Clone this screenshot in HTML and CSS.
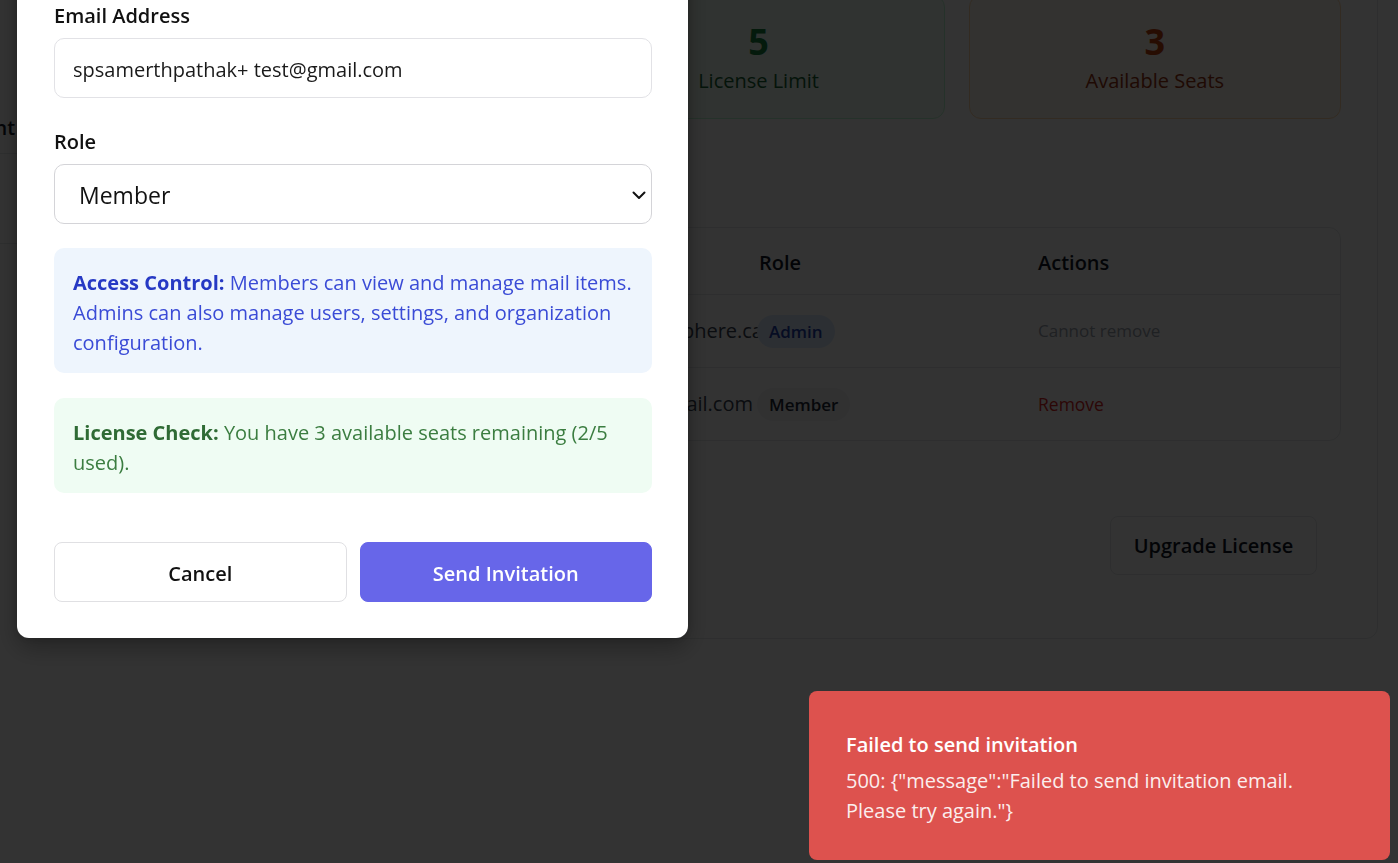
FILE: index.html
```html
<!DOCTYPE html>
<html lang="en">
<head>
<meta charset="utf-8">
<title>Team Members</title>
<link rel="stylesheet" href="styles.css">
</head>
<body>
<div class="app">
  <aside class="sidebar">
    <div class="side-brand">
      <div class="brand-name">Mail</div>
      <div class="brand-sub">Management</div>
    </div>
    <nav class="side-nav">
      <div class="side-link">Team</div>
    </nav>
  </aside>
  <main class="main">
    <section class="panel">
      <div class="stats">
        <div class="stat stat-blue">
          <div class="stat-num">2</div>
          <div class="stat-label">Active Members</div>
        </div>
        <div class="stat stat-green">
          <div class="stat-num">5</div>
          <div class="stat-label">License Limit</div>
        </div>
        <div class="stat stat-orange">
          <div class="stat-num">3</div>
          <div class="stat-label">Available Seats</div>
        </div>
      </div>

      <div class="section-head">
        <h2>Team Members</h2>
        <p>Manage who has access to your organization.</p>
      </div>

      <div class="table">
        <div class="tr th">
          <div class="td">Name</div>
          <div class="td">Email</div>
          <div class="td">Role</div>
          <div class="td">Actions</div>
        </div>
        <div class="tr">
          <div class="td">Organization Owner</div>
          <div class="td email"><span class="email-text over">owner@mailsphere.ca</span></div>
          <div class="td"><span class="badge badge-admin">Admin</span></div>
          <div class="td muted">Cannot remove</div>
        </div>
        <div class="tr">
          <div class="td">Samerth Pathak</div>
          <div class="td email"><span class="email-text">spsamerthpathak@gmail.com</span></div>
          <div class="td"><span class="badge badge-member">Member</span></div>
          <div class="td danger">Remove</div>
        </div>
      </div>

      <div class="license-bar">
        <div class="license-info">2 of 5 seats used</div>
        <button class="btn-outline">Upgrade License</button>
      </div>
    </section>
  </main>
</div>

<div class="overlay">
  <div class="modal">
    <div class="modal-head">
      <h2>Invite Team Member</h2>
      <p>Send an invitation to join your organization.</p>
    </div>
    <div class="field field-email">
      <label class="label">Email Address</label>
      <input class="input" type="text" value="spsamerthpathak+ test@gmail.com">
    </div>
    <div class="field field-role">
      <label class="label">Role</label>
      <div class="select-wrap">
        <select class="select">
          <option>Member</option>
          <option>Admin</option>
        </select>
        <svg class="chevron" width="14" height="9" viewBox="0 0 14 9"><path d="M1.5 1.5 L7 7 L12.5 1.5" fill="none" stroke="#111" stroke-width="2" stroke-linecap="round" stroke-linejoin="round"/></svg>
      </div>
    </div>
    <div class="note note-blue">
      <strong>Access Control:</strong> Members can view and manage mail items. Admins can also manage users, settings, and organization configuration.
    </div>
    <div class="note note-green">
      <strong>License Check:</strong> You have 3 available seats remaining (2/5 used).
    </div>
    <div class="actions">
      <button class="btn btn-cancel">Cancel</button>
      <button class="btn btn-primary">Send Invitation</button>
    </div>
  </div>
</div>

<div class="toast">
  <div class="toast-title">Failed to send invitation</div>
  <div class="toast-msg">500: {"message":"Failed to send invitation email. Please try again."}</div>
</div>
</body>
</html>
```

FILE: styles.css
```css
* {
  box-sizing: border-box;
  margin: 0;
  padding: 0;
}

html, body {
  height: 100%;
}

body {
  font-family: "Open Sans", "Noto Sans", sans-serif;
  font-size: 20px;
  line-height: 28px;
  color: #111827;
  background: #ffffff;
  overflow: hidden;
}

/* ---------- background page (scrolled) ---------- */
.app {
  display: flex;
  margin: -62px 0 0 -161px;
  min-height: 1100px;
}

.sidebar {
  width: 280px;
  flex: none;
  background: #ffffff;
}

.side-brand {
  height: 216px;
  display: flex;
  flex-direction: column;
  justify-content: flex-end;
  padding: 0 0 11px 48px;
  border-bottom: 1px solid #e5e7eb;
  font-weight: 600;
  white-space: nowrap;
}

.brand-name {
  font-size: 24px;
  line-height: 32px;
}

.side-link {
  height: 90px;
  display: flex;
  align-items: center;
  padding-left: 48px;
  border-bottom: 1px solid #e5e7eb;
}

.main {
  flex: 1;
  min-width: 0;
  padding: 20px 20px 40px 20px;
}

.panel {
  background: #fff;
  border: 1px solid #e5e7eb;
  border-radius: 12px;
  padding: 36px 36px 38px;
}

.stats {
  display: grid;
  grid-template-columns: repeat(3, 1fr);
  gap: 24px;
}

.stat {
  border: 1px solid;
  border-radius: 12px;
  padding: 24px 24px 23px;
  text-align: center;
}

.stat-num {
  font-size: 36px;
  line-height: 44px;
  font-weight: 700;
}

.stat-label {
  font-size: 20px;
  line-height: 28px;
  margin-top: 3px;
}

.stat-blue { background: #eff6ff; border-color: #bfdbfe; color: #1d4ed8; }
.stat-green { background: #f0fdf4; border-color: #bbf7d0; color: #15803d; }
.stat-green .stat-label { color: #166534; }
.stat-orange { background: #fff7ed; border-color: #fed7aa; color: #c2410c; }
.stat-orange .stat-label { color: #9a3412; }

.section-head {
  margin: 28px 0 24px;
}

.section-head h2 {
  font-size: 24px;
  line-height: 32px;
  font-weight: 600;
}

.section-head p {
  font-size: 17px;
  line-height: 24px;
  color: #6b7280;
}

.table {
  border: 1px solid #e5e7eb;
  border-radius: 12px;
  overflow: hidden;
}

.tr {
  display: grid;
  grid-template-columns: 291px 291px 279px 1fr;
  align-items: center;
  height: 73px;
  border-bottom: 1px solid #e5e7eb;
  color: #374151;
}

.tr:last-child {
  border-bottom: none;
  height: 72px;
}

.th {
  height: 67px;
  padding-top: 3px;
  font-weight: 600;
  color: #111827;
}

.td {
  padding-left: 24px;
  white-space: nowrap;
}

.td:nth-child(3),
.td:nth-child(4) {
  padding-left: 0;
}

.email {
  display: flex;
  justify-content: flex-end;
  overflow: hidden;
  padding-right: 6px;
}

.email-text.over {
  margin-right: -10px;
}

.badge {
  display: inline-block;
  margin-left: -2px;
  font-size: 17px;
  line-height: 25px;
  font-weight: 600;
  padding: 4px 12px;
  border-radius: 999px;
}

.badge-admin { background: #dbeafe; color: #1e40af; }
.badge-member { background: #f3f4f6; color: #1f2937; }

.muted { color: #9ca3af; font-size: 17px; }
.danger { color: #dc2626; font-size: 17.5px; }

.license-bar {
  margin-top: 50px;
  border: 1px solid transparent;
  padding: 24px 23px 24px 24px;
  display: flex;
  align-items: center;
  justify-content: space-between;
}

.license-info {
  color: #6b7280;
}

.btn-outline {
  height: 59px;
  width: 207px;
  border: 1px solid #e5e7eb;
  border-radius: 8px;
  background: #fff;
  font: 600 20px/28px "Open Sans", sans-serif;
  color: #111827;
}

/* ---------- modal ---------- */
.overlay {
  position: fixed;
  inset: 0;
  background: rgba(0, 0, 0, 0.8);
  display: flex;
  align-items: flex-end;
  padding: 0 0 225px 17px;
}

.modal {
  width: 671px;
  background: #fff;
  border-radius: 12px;
  padding: 36px 36px 36px 37px;
  box-shadow: 0 10px 25px rgba(0, 0, 0, 0.3), 0 0 12px rgba(0, 0, 0, 0.15);
}

.modal-head {
  margin-bottom: 28px;
}

.modal-head h2 {
  font-size: 26px;
  line-height: 34px;
  font-weight: 600;
}

.modal-head p {
  color: #6b7280;
}

.label {
  display: block;
  font-weight: 600;
  line-height: 28px;
  margin-bottom: 8px;
  color: #111;
}

.field-email {
  margin-bottom: 30px;
}

.field-role {
  margin-bottom: 24px;
}

.input {
  display: block;
  width: 100%;
  height: 60px;
  border: 1px solid #e2e2e6;
  border-radius: 10px;
  padding: 2px 18px 0;
  font: 400 20px "Open Sans", sans-serif;
  color: #1a1a1a;
  background: #fff;
}

.select-wrap {
  position: relative;
}

.select {
  display: block;
  width: 100%;
  height: 60px;
  border: 1px solid #d4d4d8;
  border-radius: 10px;
  padding: 2px 24px 0;
  font: 400 23px "Open Sans", sans-serif;
  color: #111;
  background: #fff;
  appearance: none;
  -webkit-appearance: none;
}

.chevron {
  position: absolute;
  right: 6px;
  top: 27px;
}

.note {
  border-radius: 10px;
  padding: 20px 19px 15px;
  line-height: 30px;
}

.note-blue {
  background: #eef5fd;
  color: #3a4bd6;
  margin-bottom: 25px;
}

.note-blue strong {
  color: #2639c4;
  font-weight: 700;
}

.note-green {
  background: #effcf3;
  color: #3b7d40;
}

.note-green strong {
  color: #2f6b35;
  font-weight: 700;
}

.actions {
  margin-top: 49px;
  display: grid;
  grid-template-columns: 1fr 1fr;
  gap: 13px;
}

.btn {
  height: 60px;
  padding-top: 2px;
  border-radius: 8px;
  font: 600 20px "Open Sans", sans-serif;
}

.btn-cancel {
  background: #fff;
  border: 1px solid #e0e0e3;
  color: #111;
}

.btn-primary {
  background: #6766e9;
  border: 1px solid #6766e9;
  color: #fff;
}

/* ---------- toast ---------- */
.toast {
  position: fixed;
  right: 8px;
  bottom: 3px;
  width: 581px;
  background: #dd524e;
  color: #fff;
  border-radius: 8px;
  padding: 40px 70px 34px 37px;
}

.toast-title {
  font-weight: 600;
  line-height: 28px;
  margin-bottom: 7px;
}

.toast-msg {
  line-height: 30px;
  opacity: 0.9;
}
```
